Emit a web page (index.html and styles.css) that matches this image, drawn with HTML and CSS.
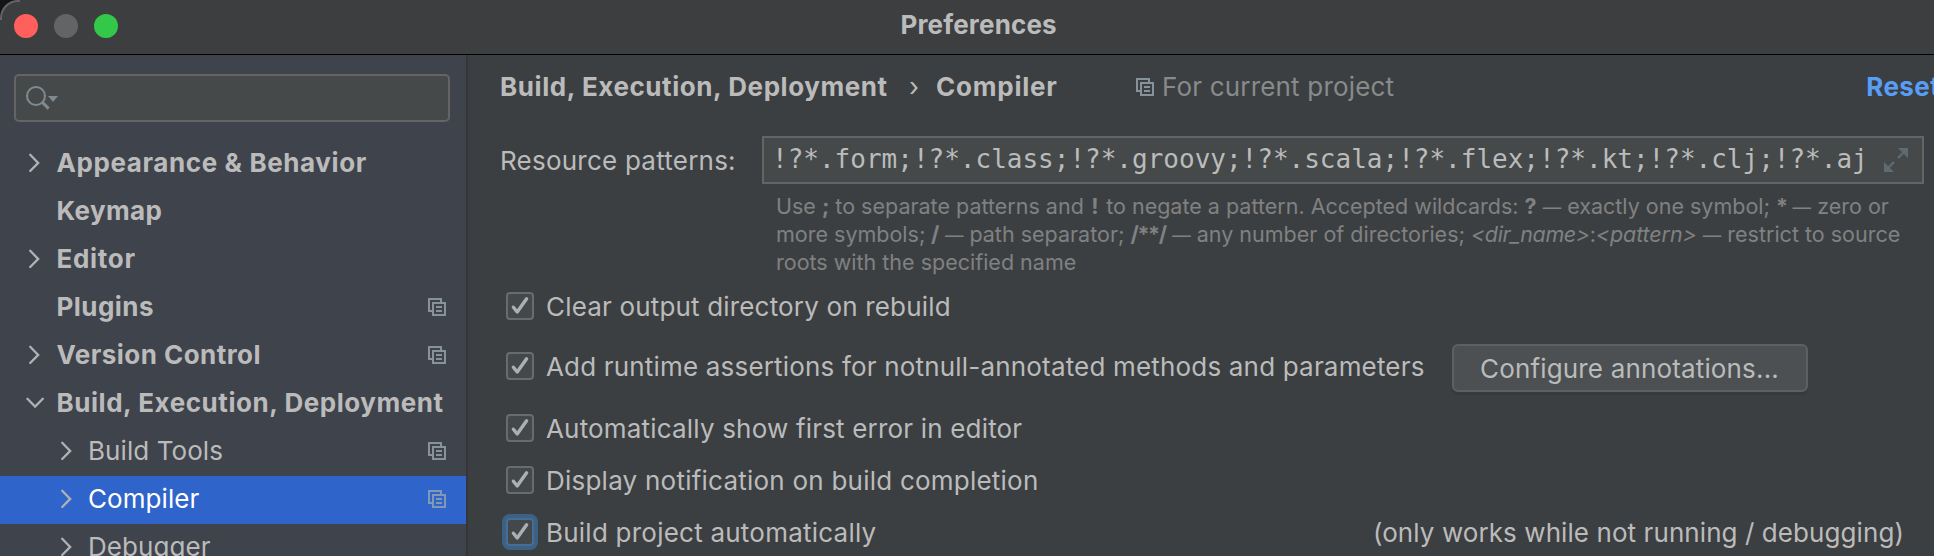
FILE: index.html
```html
<!DOCTYPE html>
<html lang="en">
<head>
<meta charset="utf-8">
<title>Preferences</title>
<link rel="stylesheet" href="styles.css">
</head>
<body>
<svg class="defs" width="0" height="0">
  <symbol id="copy" viewBox="0 0 18 18"><path d="M0 0H14V4H12V2H2V12H4V14H0Z"/><path fill-rule="evenodd" d="M4 4H18V18H4ZM6 6V16H16V6Z"/><path d="M8 8H14V10H8ZM8 12H14V14H8Z"/></symbol>
  <symbol id="right" viewBox="0 0 12 20"><path d="M2.2 1.8L10.2 9.9L2.2 18" fill="none" stroke="currentColor" stroke-width="2.3" stroke-linecap="round"/></symbol>
  <symbol id="down" viewBox="0 0 18 12"><path d="M1.4 1.8L9.1 9.6L16.8 1.8" fill="none" stroke="currentColor" stroke-width="2.3" stroke-linecap="round"/></symbol>
  <symbol id="check" viewBox="0 0 24 24"><path d="M5.4 13.2L9.2 18L18.6 4.8" fill="none" stroke="currentColor" stroke-width="3.4" stroke-linecap="round" stroke-linejoin="round"/></symbol>
</svg>
<div class="window">
  <header class="titlebar">
    <div class="lights"><i class="light close"></i><i class="light minimize"></i><i class="light zoom"></i></div>
    <div class="title">Preferences</div>
  </header>
  <div class="body">
    <aside class="sidebar">
      <div class="search">
        <svg width="34" height="26" viewBox="0 0 34 26"><circle cx="11" cy="11" r="9" fill="none" stroke="currentColor" stroke-width="2"/><path d="M17.4 17.4L23.6 23.6" stroke="currentColor" stroke-width="3"/><path d="M23 11H33L28 17Z" fill="currentColor"/></svg>
      </div>
      <ul class="tree">
        <li class="row top"><svg class="arrow"><use href="#right"/></svg><span class="name appearance">Appearance &amp; Behavior</span></li>
        <li class="row top"><span class="arrow"></span><span class="name keymap">Keymap</span></li>
        <li class="row top"><svg class="arrow"><use href="#right"/></svg><span class="name editor">Editor</span></li>
        <li class="row top"><span class="arrow"></span><span class="name">Plugins</span><svg class="copy"><use href="#copy"/></svg></li>
        <li class="row top"><svg class="arrow"><use href="#right"/></svg><span class="name">Version Control</span><svg class="copy"><use href="#copy"/></svg></li>
        <li class="row top"><svg class="arrow open"><use href="#down"/></svg><span class="name build">Build, Execution, Deployment</span></li>
        <li class="row sub"><svg class="arrow"><use href="#right"/></svg><span class="name">Build Tools</span><svg class="copy"><use href="#copy"/></svg></li>
        <li class="row sub selected"><svg class="arrow"><use href="#right"/></svg><span class="name">Compiler</span><svg class="copy"><use href="#copy"/></svg></li>
        <li class="row sub"><svg class="arrow"><use href="#right"/></svg><span class="name">Debugger</span></li>
      </ul>
    </aside>
    <main class="content">
      <div class="crumbs">
        <span class="crumb parent">Build, Execution, Deployment</span>
        <span class="crumb-sep">›</span>
        <span class="crumb current">Compiler</span>
        <svg class="copy"><use href="#copy"/></svg>
        <span class="scope">For current project</span>
        <a class="reset">Reset</a>
      </div>
      <div class="patterns">
        <label class="patterns-label">Resource patterns:</label>
        <div class="field"><span class="field-text">!?*.form;!?*.class;!?*.groovy;!?*.scala;!?*.flex;!?*.kt;!?*.clj;!?*.aj</span><svg class="expand" width="24" height="24" viewBox="0 0 24 24"><path d="M14 0H24V10ZM0 14V24H10Z" fill="currentColor"/><path d="M14 10L20 4M4 20L10 14" stroke="currentColor" stroke-width="2.4"/></svg></div>
      </div>
      <div class="help">
        <div>Use <b>;</b> to separate patterns and <b class="bang">!</b> to negate a pattern. Accepted wildcards: <b>?</b> <span class="dash">—</span> exactly one symbol; <b class="star">*</b> <span class="dash">—</span> zero or</div>
        <div>more symbols; <b class="slash">/</b> <span class="dash">—</span> path separator; <b class="any">/**/</b> <span class="dash">—</span> any number of directories; <i class="dir">&lt;dir_name&gt;</i>:<i class="pattern">&lt;pattern&gt;</i> <span class="dash">—</span> restrict to source</div>
        <div>roots with the specified name</div>
      </div>
      <div class="options">
        <div class="option"><span class="box"><svg><use href="#check"/></svg></span><span class="text clear">Clear output directory on rebuild</span></div>
        <div class="option tall"><span class="box"><svg><use href="#check"/></svg></span><span class="text runtime">Add runtime assertions for notnull-annotated methods and parameters</span><button class="button">Configure annotations...</button></div>
        <div class="option third"><span class="box"><svg><use href="#check"/></svg></span><span class="text auto">Automatically show first error in editor</span></div>
        <div class="option"><span class="box"><svg><use href="#check"/></svg></span><span class="text">Display notification on build completion</span></div>
        <div class="option"><span class="box focused"><svg><use href="#check"/></svg></span><span class="text">Build project automatically</span><span class="note">(only works while not running / debugging)</span></div>
      </div>
    </main>
  </div>
</div>
</body>
</html>
```
FILE: styles.css
```css
* { box-sizing: border-box; }
body { margin: 0; background: #131516; color: #bbbbbb; font: 26px/48px Inter, "Liberation Sans", sans-serif; }
.defs { display: block; position: absolute; }
svg { flex: none; fill: currentColor; }

.window { width: 1934px; height: 556px; overflow: hidden; display: flex; flex-direction: column; border-top-left-radius: 18px; background: #3c3f41; }

/* Title bar */
.titlebar { position: relative; flex: none; height: 55px; background: #3d3e40; border-bottom: 1px solid #000; display: grid; grid-template-columns: 902px 1fr; border-top-left-radius: 18px; }
.titlebar::before { content: ""; position: absolute; left: 0; top: 0; width: 18px; height: 18px; border: solid #626466; border-width: 2px 0 0 2px; border-top-left-radius: 18px; }
.lights { display: flex; gap: 16px; padding: 14px; }
.light { width: 24px; height: 24px; border-radius: 50%; }
.close { background: #ff605b; }
.minimize { background: #636466; }
.zoom { background: #34c84a; }
.title { font-weight: 700; line-height: 49px; letter-spacing: 0.16px; margin-left: -1.5px; }

/* Sidebar */
.body { flex: 1; display: flex; min-height: 0; }
.sidebar { flex: none; width: 468px; background: #3f434c; border-right: 2px solid #353537; }
.search { margin: 19px 16px 18px 14px; height: 48px; border: 2px solid #646464; border-radius: 5px; background: #45494a; color: #7f8b91; padding: 9px; display: flex; }
.tree { list-style: none; margin: 0; padding: 0; }
.row { display: flex; height: 48px; align-items: center; line-height: 45px; padding: 0 20px 0 28px; }
.row.top { font-weight: 700; letter-spacing: 0.46px; }
.row.sub { padding-left: 60px; letter-spacing: 0.08px; }
.name { white-space: nowrap; height: 48px; }
.row.top .name { padding-left: 0.5px; }
.appearance { letter-spacing: 0.6px; }
.keymap { letter-spacing: 0.35px; }
.editor { letter-spacing: 0.7px; }
.build { letter-spacing: 0.55px; }
.arrow { width: 12px; height: 20px; margin: -2px 16px 0 0; flex: none; color: #afb1b3; }
.arrow.open { width: 18px; height: 12px; margin: -3px 12px 0 -2px; }
.copy { width: 18px; height: 18px; margin: -2px 0 0 auto; color: #87939a; }
.selected { background: #2f65ca; color: #fff; }
.selected .copy { color: #8299b6; }

/* Page header */
.content { flex: 1; min-width: 0; padding-left: 32px; }
.crumbs { height: 81px; display: flex; line-height: 63px; white-space: nowrap; }
.crumbs > * { flex: none; }
.crumb { font-weight: 700; }
.parent { letter-spacing: 0.57px; width: 409px; }
.crumb-sep { width: 27px; }
.current { letter-spacing: 0.78px; width: 200px; }
.crumbs .copy { margin: 23px 8px 0 0; }
.scope { color: #888a8b; letter-spacing: 0.18px; }
.reset { font-weight: 700; color: #589df6; margin-left: 472px; letter-spacing: 0.4px; }

/* Resource patterns */
.patterns { display: flex; height: 48px; }
.patterns-label { width: 262px; line-height: 49px; letter-spacing: 0.23px; }
.field { width: 1162px; height: 48px; border: 2px solid #646464; background: #45494a; display: flex; align-items: center; padding: 0 14px 0 8px; }
.field-text { font: 26px/42px "DejaVu Sans Mono", monospace; flex: 1; white-space: pre; margin-top: -2px; }
.expand { color: #5f6b70; }
.help { margin: 8px 0 0 276px; color: #808182; font-size: 21.5px; line-height: 28px; white-space: nowrap; height: 100px; }
.dash { font-size: 18.5px; line-height: 1; }
.bang { margin: 0 1.5px; }
.star { margin-right: -1.5px; }
.slash { margin: 0 -0.5px; }
.any { letter-spacing: -1.4px; margin-right: 0.5px; }
.dir { letter-spacing: -0.4px; }
.pattern { letter-spacing: -0.1px; }

/* Options */
.options { display: flex; flex-direction: column; gap: 24px; }
.option { display: flex; height: 28px; line-height: 29px; margin-left: 6px; white-space: nowrap; letter-spacing: 0.23px; }
.tall { height: 48px; padding-top: 8px; }
.third { margin-top: -2px; }
.clear { letter-spacing: 0.17px; }
.runtime { letter-spacing: 0.18px; width: 878px; }
.auto { letter-spacing: 0.18px; }
.box { flex: none; width: 28px; height: 28px; margin-right: 12px; border: 2px solid #6b6b6b; border-radius: 4px; background: #43494a; color: #aeb0b0; display: flex; }
.box svg { width: 24px; height: 24px; }
.focused { border-color: #466d94; box-shadow: 0 0 0 4px #3d6185; }
.button { margin: -8px 0 0 28px; width: 356px; height: 48px; padding: 0 1px 0 0; border: 2px solid #5e6060; border-radius: 6px; background: #4c5052; color: #bbbbbb; font: inherit; letter-spacing: 0.16px; line-height: 45px; box-shadow: 0 3px 1px #37393b; }
.note { margin-left: auto; margin-right: 30px; letter-spacing: 0.08px; }
```
